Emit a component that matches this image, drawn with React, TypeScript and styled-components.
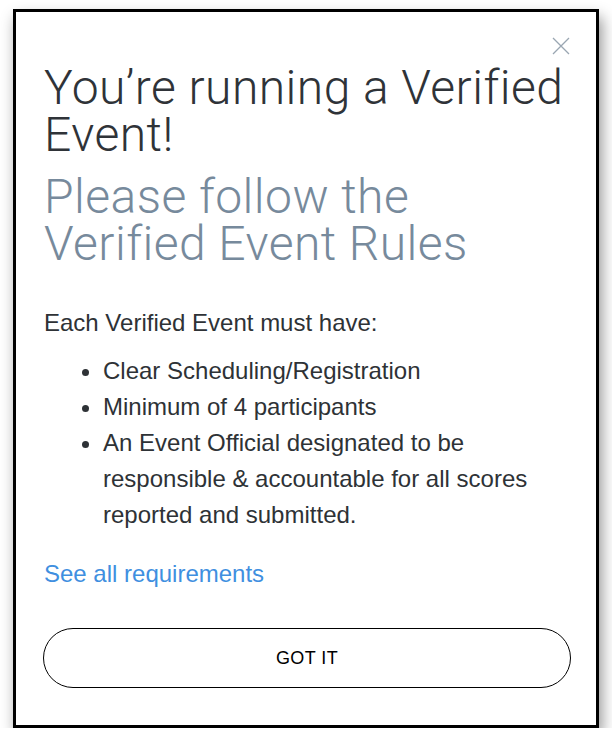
import React from "react";
import styled, { createGlobalStyle } from "styled-components";

const Global = createGlobalStyle`
  html, body { margin: 0; padding: 0; background: #ffffff; }
  body { font-family: "Liberation Sans", Arial, sans-serif; }
`;

const Frame = styled.div`
  box-sizing: border-box;
  margin: 9px 0 0 13px;
  width: 586px;
  height: 719px;
  border: 3px solid #000;
  background: #fff;
  box-shadow: 3px 8px 14px rgba(0, 0, 0, 0.42);
  position: relative;
  padding: 52px 28px 0 28px;
`;

const Close = styled.button`
  position: absolute;
  top: 23px;
  right: 24px;
  width: 22px;
  height: 22px;
  padding: 0;
  border: 0;
  background: none;
  cursor: pointer;
`;

const Title = styled.h1<{ $muted?: boolean }>`
  margin: 0;
  font-family: Roboto, "Liberation Sans", Arial, sans-serif;
  font-weight: 300;
  font-size: 48px;
  line-height: 47px;
  color: ${(p) => (p.$muted ? "#778a9c" : "#2f3338")};
  letter-spacing: 0.45px;
`;

const Subtitle = styled(Title)`
  margin-top: 15px;
`;

const Body = styled.p`
  margin: 38px 0 0 0;
  font-size: 24px;
  line-height: 36px;
  color: #2e3236;
`;

const List = styled.ul`
  margin: 12px 0 0 0;
  padding-left: 59px;
  font-size: 24px;
  line-height: 36px;
  color: #2e3236;
`;

const Item = styled.li``;

const Link = styled.a`
  display: block;
  margin-top: 23px;
  font-size: 24px;
  line-height: 36px;
  color: #3f8fe0;
  text-decoration: none;
`;

const Button = styled.button`
  display: block;
  box-sizing: border-box;
  margin: 36px 0 0 -1px;
  width: 528px;
  height: 60px;
  border: 1px solid #000;
  border-radius: 30px;
  background: #fff;
  font-family: "Liberation Sans", Arial, sans-serif;
  font-size: 18px;
  letter-spacing: 0.4px;
  color: #000;
`;

export default function App() {
  return (
    <>
      <Global />
      <Frame>
        <Close aria-label="Close">
          <svg width="22" height="22" viewBox="0 0 22 22">
            <path d="M3 3 L19 19 M19 3 L3 19" stroke="#9aa6b2" strokeWidth="1.3" fill="none" />
          </svg>
        </Close>
        <Title>You’re running a Verified Event!</Title>
        <Subtitle $muted>Please follow the Verified Event Rules</Subtitle>
        <Body>Each Verified Event must have:</Body>
        <List>
          <Item>Clear Scheduling/Registration</Item>
          <Item>Minimum of 4 participants</Item>
          <Item>An Event Official designated to be responsible &amp; accountable for all scores reported and submitted.</Item>
        </List>
        <Link href="#">See all requirements</Link>
        <Button>GOT IT</Button>
      </Frame>
    </>
  );
}
